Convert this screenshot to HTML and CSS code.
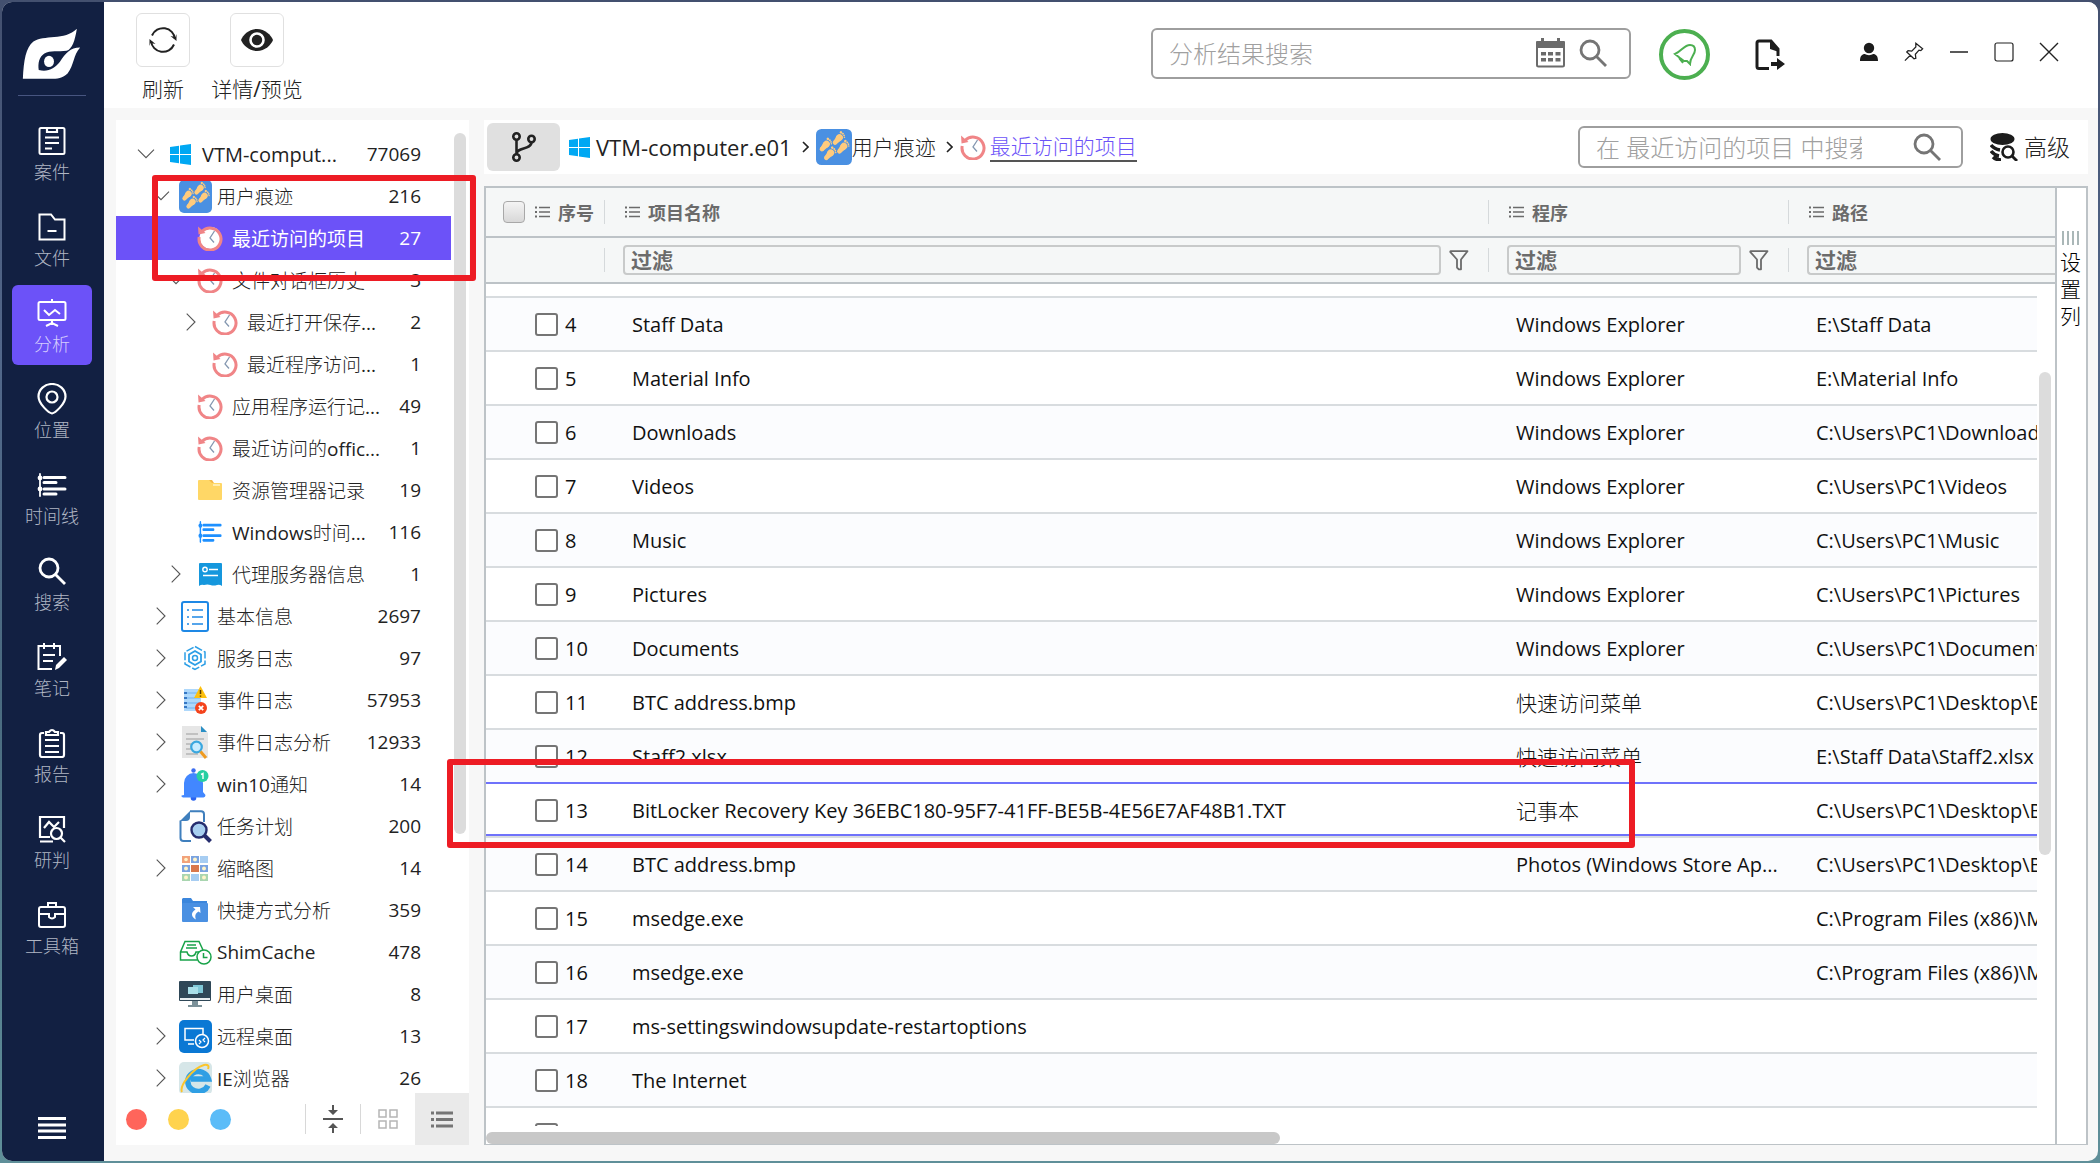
FILE: index.html
```html
<!DOCTYPE html>
<html lang="zh-CN">
<head>
<meta charset="utf-8">
<title>分析 - 最近访问的项目</title>
<link rel="stylesheet" href="styles.css">
</head>
<body>
<svg class="defs" aria-hidden="true">
  <symbol id="i-win" viewBox="0 0 21 21"><path fill="#00a8f3" d="M0 3l9-1.300v8.300H0zM10 1.500L21 0v10H10zM0 11h9v8.300L0 18zM10 11h11v10l-11-1.500z"/></symbol>
  <symbol id="i-feet" viewBox="0 0 33 33"><rect width="33" height="33" rx="5" fill="#4a90e2"/>
    <g fill="#ffcb7d">
      <g id="foot" transform="translate(20.500 9) rotate(42)"><ellipse cx="0" cy="-1.500" rx="3.100" ry="3.300"/><path d="M-3 -1.500L-1.800 5H2L2.900 -1.500z"/><ellipse cx="0" cy="4.500" rx="2.100" ry="2.200"/><circle cx="-2.200" cy="-6" r="1.200"/><circle cx="0" cy="-6.300" r=".9"/><circle cx="1.800" cy="-5.800" r=".8"/><circle cx="3.200" cy="-4.800" r=".7"/></g>
      <use href="#foot" transform="translate(-12 6)"/>
      <use href="#foot" transform="translate(4 8)"/>
      <use href="#foot" transform="translate(-8 14)"/>
    </g></symbol>
  <symbol id="i-clock" viewBox="0 0 26 26"><circle cx="13.500" cy="13" r="11" fill="#fff"/><path d="M5 6.500A11 11 0 1 1 2.200 12" fill="none" stroke="#f08587" stroke-width="3"/><path d="M1 1.500l7.500 6.500L1.500 9.500z" fill="#f08587"/><path d="M17.500 6l-4.500 7 4 4.500" fill="none" stroke="#8497b0" stroke-width="1.300"/></symbol>
  <symbol id="i-folder" viewBox="0 0 24 20"><path fill="#f5b94a" d="M10 0h4l2 3H9z"/><path fill="#ffd766" d="M1 0h10l3 3h9q1 0 1 1v15q0 1-1 1H1q-1 0-1-1V1q0-1 1-1z"/><path d="M15 5h7" stroke="#fff3c9" stroke-width="1.500"/></symbol>
  <symbol id="i-timeline" viewBox="0 0 30 24"><g stroke="currentColor" stroke-width="3" stroke-linecap="round"><path d="M7 4.500h21M7 9.500h12M7 16h21M7 21h12"/><path d="M3 1v22" stroke-width="1.800"/></g><circle cx="3" cy="5" r="2.400" fill="currentColor"/><circle cx="3" cy="16" r="2.400" fill="currentColor"/></symbol>
  <symbol id="i-proxy" viewBox="0 0 23 23"><path fill="#1597dd" d="M1 0h21q1 0 1 1v22q-2.500-2-5-1-3.500 1-6.500 0t-6.500 0q-2.500-1-5 1V1q0-1 1-1z"/><g fill="none" stroke="#fff" stroke-width="1.400"><circle cx="6" cy="6.500" r="2.200"/><path d="M10 6.500h9M4 12.500h15"/></g></symbol>
  <symbol id="i-list-box" viewBox="0 0 28 31"><rect x="1" y="1" width="26" height="29" rx="2" fill="#fff" stroke="#1e88e5" stroke-width="2"/><path d="M6 9h2M6 16h2M6 23h2M11 9h11M11 16h11M11 23h11" stroke="#1e88e5" stroke-width="1.400"/></symbol>
  <symbol id="i-hex" viewBox="0 0 24 26"><g fill="none" stroke="#2d9fe6" stroke-width="1.500"><path d="M12 1.500L22 7v12l-10 5.500L2 19V7z" stroke-dasharray="8 2"/><path d="M12 6l6 3.500v7L12 20l-6-3.500v-7z" stroke-width="1.800"/><circle cx="12" cy="13" r="2.500"/></g></symbol>
  <symbol id="i-event" viewBox="0 0 24 28"><rect x="1" y="3" width="17" height="22" fill="#aed8fb"/><path d="M3 7h14M3 12h14M3 17h14M3 22h12" stroke="#6fb1ee" stroke-width="1"/><path d="M1 7h3M1 12h3M1 17h3M1 21h3" stroke="#3677c4" stroke-width="2"/><path d="M17.500 0L24 12H11z" fill="#fdc010"/><path d="M17.500 4v4M17.500 9.500v1.200" stroke="#5a3c00" stroke-width="1.500"/><circle cx="18" cy="22" r="6" fill="#f4431c"/><path d="M15.800 19.800l4.400 4.400m0-4.400l-4.400 4.400" stroke="#fff" stroke-width="1.700"/></symbol>
  <symbol id="i-doc-search" viewBox="0 0 28 33"><path d="M1 0h19l7 7v25H1z" fill="#e6e6e6"/><path d="M20 0l6 6h-6z" fill="#2a8fc5"/><path d="M5 8h12M5 13h18M5 18h6M5 23h5M5 28h12" stroke="#9b9b9b" stroke-width="1.200"/><circle cx="15.500" cy="21" r="5.300" fill="#c9ecff" stroke="#3aa7df" stroke-width="2.200"/><path d="M19.500 25.500L25 32" stroke="#ef9b21" stroke-width="3"/></symbol>
  <symbol id="i-bell" viewBox="0 0 28 33"><circle cx="12.500" cy="2.500" r="2.200" fill="#3c6df0"/><circle cx="12.500" cy="30" r="2.800" fill="#2a63ef"/><path d="M3 27V15a9.500 10 0 0 1 19 0v9l2.500 3q0 2-2 2.500H2q-2-.5-1.500-2z" fill="#4287ff"/><circle cx="21.500" cy="8" r="6" fill="#27cfa2"/><path d="M20 6.500l2-1V11" fill="none" stroke="#fff" stroke-width="1.400"/></symbol>
  <symbol id="i-task" viewBox="0 0 33 33"><path d="M11 1.200h11q3 0 3 3V12M12 31H4.500q-3 0-3-3V10.500" fill="none" stroke="#3f7fbd" stroke-width="2"/><path d="M1 11L11 1v6q0 4-4 4z" fill="#3f7fbd"/><circle cx="20" cy="20" r="8" fill="#a8cff0" stroke="#fff" stroke-width="2"/><circle cx="20" cy="20" r="7.500" fill="none" stroke="#262d6e" stroke-width="2.400"/><path d="M25.500 25.500l6 6" stroke="#262d6e" stroke-width="4"/></symbol>
  <symbol id="i-thumbs" viewBox="0 0 26 26"><path fill="#f2a27a" d="M0 1h8v7H0z"/><path fill="#7aa3e0" d="M9 1h8v7H9zM0 10h8v7H0zM18 10h8v7h-8z"/><path fill="#a7cdf2" d="M18 1h8v7h-8zM9 19h8v7H9z"/><path fill="#d9774b" d="M9 10h8v7H9z"/><path fill="#a9d5b0" d="M0 19h8v7H0zM18 19h8v7h-8z"/><g fill="#fff4c9"><circle cx="4" cy="4.500" r="1.800"/><circle cx="13" cy="4.500" r="2"/><circle cx="4" cy="13.500" r="2"/><circle cx="22" cy="13.500" r="2"/><circle cx="4" cy="22.500" r="2"/><circle cx="22" cy="22.500" r="2"/></g></symbol>
  <symbol id="i-shortcut" viewBox="0 0 26 24"><path fill="#3b86dc" d="M1 0h8l2 3h14v4H0V1z"/><rect y="5" width="26" height="19" rx="1" fill="#4a90e2"/><path fill="#fff" d="M11 9l7 0 .5 6-2-1.500c-3 1.500-4 4.500-2.500 8-5-2.500-5.500-7-.5-10z"/></symbol>
  <symbol id="i-shim" viewBox="0 0 33 25"><g fill="none" stroke="#18a349" stroke-width="1.500"><path d="M18 20H1.500v-8L6 1.500h14L24 10M1.500 12H8q1 4 4.500 4T17 12h3M8 5h9M7 8h11"/><circle cx="25" cy="17" r="7"/><path d="M24.500 13v4.500h4"/></g></symbol>
  <symbol id="i-desktop" viewBox="0 0 32 26"><rect width="32" height="20" rx="1" fill="#2f4757"/><path fill="#e8eef0" d="M1 17h30v2H1z"/><path fill="#7b9199" d="M13 20h6v4h4v2H9v-2h4z"/><path fill="#7fc7d6" d="M14 4h10v8H14z"/><path fill="#a9dfe8" d="M9 6h10v7H9z"/></symbol>
  <symbol id="i-remote" viewBox="0 0 33 33"><rect width="33" height="33" rx="5" fill="#0a78d4"/><g fill="none" stroke="#fff" stroke-width="1.500"><path d="M15 20H6V8.500h18V14M9 24h6"/><circle cx="23" cy="21" r="6.500"/><path d="M20 20l2 2-2 2M26 18l-2 2 2 2" stroke-width="1.200"/></g></symbol>
  <symbol id="i-ie" viewBox="0 0 33 33"><rect width="33" height="33" rx="5" fill="#d6e6e8"/><path d="M29 23.500a10.500 10 0 1 1 .5-6.500H12" fill="none" stroke="#2f9fe4" stroke-width="5.500"/><path d="M3 30C0 24 14 6 25 3q6-1 4 4" fill="none" stroke="#fbc52c" stroke-width="2"/></symbol>
  <symbol id="i-down" viewBox="0 0 18 10"><path d="M1 .7l8 8 8-8" fill="none" stroke="#555" stroke-width="1.100"/></symbol>
  <symbol id="i-right" viewBox="0 0 10 18"><path d="M.7 .7L9 9 .7 17.300" fill="none" stroke="#555" stroke-width="1.100"/></symbol>
  <symbol id="i-search" viewBox="0 0 28 28"><g fill="none" stroke="currentColor" stroke-width="2.800"><circle cx="11" cy="11" r="9"/><path d="M17.500 17.500L27 27"/></g></symbol>
  <symbol id="i-lines" viewBox="0 0 15 12"><path d="M0 1.500h2M0 6h2M0 10.500h2" stroke="currentColor" stroke-width="2"/><path d="M4 1.500h11M4 6h11M4 10.500h11" stroke="currentColor" stroke-width="1.300"/></symbol>
  <symbol id="i-funnel" viewBox="0 0 20 21"><path d="M1.500 1.200h17L12 9.500v9.800H9.800L8 17.500v-8L1.200 1.800z" fill="none" stroke="#6b6b6b" stroke-width="1.800" stroke-linejoin="round"/></symbol>
</svg>

<div class="window">
  <nav class="sidebar" aria-label="主导航">
    <svg class="logo" viewBox="71 80 180 160" aria-hidden="true"><path fill="#fff" d="M73 236C76 180 82 142 105 124C135 102 200 122 236 85C230 122 222 146 205 152C180 156 155 150 138 160C122 170 118 190 121 210C150 217 168 205 185 185C203 158 215 143 246 142C225 165 228 195 208 220C190 238 165 237 140 236Z"/><ellipse cx="152" cy="184" rx="15" ry="17" fill="#fff"/></svg>
    <ul class="nav">
      <li><button class="nav-btn"><svg width="30" height="30" viewBox="0 0 30 30"><g fill="none" stroke="currentColor" stroke-width="2"><rect x="2.500" y="2" width="25" height="26" rx="1.500"/><path d="M10 2v4h10V2M8 11.500h14M8 17h14M8 22.500h7" stroke-width="2.200"/></g></svg><span>案件</span></button></li>
      <li><button class="nav-btn"><svg width="30" height="30" viewBox="0 0 30 30"><g fill="none" stroke="currentColor" stroke-width="2"><path d="M2.500 2.500H14l4 5h9.500v20h-25zM10.500 19h9"/></g></svg><span>文件</span></button></li>
      <li><button class="nav-btn active" aria-current="page"><svg width="30" height="30" viewBox="0 0 30 30"><g fill="none" stroke="currentColor" stroke-width="2"><rect x="1.500" y="4" width="27" height="18" rx="1.500"/><path d="M15 1v3M15 22v5M9 28l6-3 6 3M7 12l5 5 6-5 5 4"/></g></svg><span>分析</span></button></li>
      <li><button class="nav-btn"><svg width="30" height="32" viewBox="0 0 30 32"><g fill="none" stroke="currentColor" stroke-width="2.200"><path d="M15 30.500C12 30 1.500 21 1.500 13.500a13.500 12.500 0 0 1 27 0C28.500 21 18 30 15 30.500z"/><circle cx="15" cy="14" r="5.500"/></g></svg><span>位置</span></button></li>
      <li><button class="nav-btn"><svg width="30" height="24"><use href="#i-timeline"/></svg><span>时间线</span></button></li>
      <li><button class="nav-btn"><svg width="28" height="28"><use href="#i-search"/></svg><span>搜索</span></button></li>
      <li><button class="nav-btn"><svg width="30" height="30" viewBox="0 0 30 30"><g fill="none" stroke="currentColor" stroke-width="2"><path d="M23 14V4H1.500v23H15M7 1v6M17 1v6M6 13h12M6 19h10"/></g><path d="M18 28l1-5 8-8 3 3-8 8z" fill="currentColor"/></svg><span>笔记</span></button></li>
      <li><button class="nav-btn"><svg width="30" height="30" viewBox="0 0 30 30"><g fill="none" stroke="currentColor" stroke-width="2.200"><path d="M7 5H5q-2 0-2 2v20q0 2 2 2h20q2 0 2-2V7q0-2-2-2h-2M9 7V4h3q3-4 6 0h3v3zM8 12h14M8 18h14M8 24h14"/></g></svg><span>报告</span></button></li>
      <li><button class="nav-btn"><svg width="28" height="28" viewBox="0 0 28 28"><g fill="none" stroke="currentColor" stroke-width="2.200"><path d="M26 13V2H2v20h10M2 26.500h13M6 13l5-6 5 5 5-5"/><circle cx="18.500" cy="18.500" r="5.500"/><path d="M22.500 22.500L27 27"/></g></svg><span>研判</span></button></li>
      <li><button class="nav-btn"><svg width="30" height="28" viewBox="0 0 30 28"><g fill="none" stroke="currentColor" stroke-width="2"><rect x="2" y="6" width="26" height="20" rx="2"/><path d="M11 6V2h8v4M2 13h10M18 13h10M12 12v4q3 3 6 0v-4"/></g></svg><span>工具箱</span></button></li>
    </ul>
    <button class="menu-btn" aria-label="菜单"><svg width="28" height="22" viewBox="0 0 28 22"><path d="M0 1.500h28M0 8h28M0 14h28M0 20.500h28" stroke="#fff" stroke-width="2.800"/></svg></button>
  </nav>

  <div class="main">
    <header class="topbar">
      <button class="tool"><span class="tool-box"><svg width="28" height="28" viewBox="0 0 28 28"><g fill="none" stroke="#222" stroke-width="2"><path d="M3 9.500A12 12 0 0 1 26 13M25 18.500A12 12 0 0 1 2 15"/></g><path fill="#222" d="M27.500 15l-6-5 5 1 1-3zM.5 13l6 5-5-1-1 3z"/></svg></span>刷新</button>
      <button class="tool"><span class="tool-box"><svg width="34" height="24" viewBox="0 0 34 24"><path fill="#222" d="M17 1c8 0 14 6 16 11-2 5-8 11-16 11S3 17 1 12C3 7 9 1 17 1z"/><circle cx="17" cy="12" r="6.500" fill="none" stroke="#fff" stroke-width="2.600"/></svg></span>详情/预览</button>
      <div class="search search-top">
        <input type="text" placeholder="分析结果搜索" aria-label="分析结果搜索">
        <button class="icon-btn" aria-label="日期"><svg width="31" height="30" viewBox="0 0 31 30"><path fill="none" stroke="#6b6b6b" stroke-width="2" d="M2 5h27v22q0 1.500-1.500 1.500h-24Q2 28.500 2 27z"/><path fill="#6b6b6b" d="M1 4q0-1 1-1h27q1 0 1 1v6H1zM6 0h3v4H6zM22 0h3v4h-3zM6 14h5v3.500H6zM13 14h5v3.500h-5zM20.500 14h5v3.500h-5zM6 20h5v3.500H6zM13 20h5v3.500h-5zM20.500 20h5v3.500h-5z"/></svg></button>
        <button class="icon-btn" aria-label="搜索"><svg width="28" height="28"><use href="#i-search"/></svg></button>
      </div>
      <button class="bell-btn" aria-label="通知"><svg width="24" height="24" viewBox="0 0 24 24"><path d="M2 12C9 9 11 3 17 3q5 0 5 5c0 5-5 7-5 14l-3-3-3 0-4-3zM6 16l4 5" fill="none" stroke="#4caf50" stroke-width="2"/></svg></button>
      <button class="icon-btn" aria-label="导出"><svg width="30" height="32" viewBox="0 0 30 32"><path d="M14 29.500H4q-2 0-2-2V4q0-2 2-2h12l7 8v7" fill="none" stroke="#1c1c1c" stroke-width="3"/><path fill="#1c1c1c" d="M15 1l9 9v3l-9-3zM16 23h6v-4l8 6-8 6v-4h-6z"/></svg></button>
      <div class="win-ctl">
        <button class="icon-btn" aria-label="用户"><svg width="20" height="20" viewBox="0 0 20 20"><circle cx="10" cy="6" r="5.200" fill="#1c1c1c"/><path fill="#1c1c1c" d="M1 19c0-5 2-7 5-7 2 1.500 6 1.500 8 0 3 0 5 2 5 7z"/></svg></button>
        <button class="icon-btn" aria-label="置顶"><svg width="20" height="20" viewBox="0 0 22 22"><path d="M13 1.500l7.500 6-2 2-2-.5-4 4.500.5 4.500-2 .5-8-7.500 1.500-1.500 4 .5 4.500-4.500zM7 14.500l-6 6" fill="none" stroke="#222" stroke-width="1.400"/></svg></button>
        <button class="icon-btn" aria-label="最小化"><svg width="20" height="20" viewBox="0 0 20 20"><path d="M1 10h18" stroke="#222" stroke-width="1.500"/></svg></button>
        <button class="icon-btn" aria-label="最大化"><svg width="20" height="20" viewBox="0 0 20 20"><rect x="1" y="1" width="18" height="18" rx="2" fill="none" stroke="#222" stroke-width="1.200"/></svg></button>
        <button class="icon-btn" aria-label="关闭"><svg width="20" height="20" viewBox="0 0 20 20"><path d="M1 1l18 18M19 1L1 19" stroke="#222" stroke-width="1.400"/></svg></button>
      </div>
    </header>

    <div class="workspace">
      <aside class="tree-panel">
        <div class="tree-body">
          <ul class="tree">
            <li><a href="#" class="node l0"><span class="tw"><svg width="18" height="10"><use href="#i-down"/></svg></span><span class="ic"><svg width="21" height="21"><use href="#i-win"/></svg></span><span class="nm">VTM-comput...</span><span class="ct">77069</span></a></li>
            <li><a href="#" class="node l1"><span class="tw"><svg width="18" height="10"><use href="#i-down"/></svg></span><span class="ic"><svg width="33" height="33"><use href="#i-feet"/></svg></span><span class="nm">用户痕迹</span><span class="ct">216</span></a></li>
            <li><a href="#" class="node l2 selected"><span class="tw"></span><span class="ic"><svg width="26" height="26"><use href="#i-clock"/></svg></span><span class="nm">最近访问的项目</span><span class="ct">27</span></a></li>
            <li><a href="#" class="node l2"><span class="tw"><svg width="18" height="10"><use href="#i-down"/></svg></span><span class="ic"><svg width="26" height="26"><use href="#i-clock"/></svg></span><span class="nm">文件对话框历史</span><span class="ct">3</span></a></li>
            <li><a href="#" class="node l3"><span class="tw"><svg width="10" height="18"><use href="#i-right"/></svg></span><span class="ic"><svg width="26" height="26"><use href="#i-clock"/></svg></span><span class="nm">最近打开保存...</span><span class="ct">2</span></a></li>
            <li><a href="#" class="node l3"><span class="tw"></span><span class="ic"><svg width="26" height="26"><use href="#i-clock"/></svg></span><span class="nm">最近程序访问...</span><span class="ct">1</span></a></li>
            <li><a href="#" class="node l2"><span class="tw"></span><span class="ic"><svg width="26" height="26"><use href="#i-clock"/></svg></span><span class="nm">应用程序运行记...</span><span class="ct">49</span></a></li>
            <li><a href="#" class="node l2"><span class="tw"></span><span class="ic"><svg width="26" height="26"><use href="#i-clock"/></svg></span><span class="nm">最近访问的offic...</span><span class="ct">1</span></a></li>
            <li><a href="#" class="node l2"><span class="tw"></span><span class="ic"><svg width="24" height="20"><use href="#i-folder"/></svg></span><span class="nm">资源管理器记录</span><span class="ct">19</span></a></li>
            <li><a href="#" class="node l2"><span class="tw"></span><span class="ic blue"><svg width="24" height="22" viewBox="0 0 30 24" preserveAspectRatio="none"><use href="#i-timeline" width="30" height="24"/></svg></span><span class="nm">Windows时间...</span><span class="ct">116</span></a></li>
            <li><a href="#" class="node l2"><span class="tw"><svg width="10" height="18"><use href="#i-right"/></svg></span><span class="ic"><svg width="23" height="23"><use href="#i-proxy"/></svg></span><span class="nm">代理服务器信息</span><span class="ct">1</span></a></li>
            <li><a href="#" class="node l1"><span class="tw"><svg width="10" height="18"><use href="#i-right"/></svg></span><span class="ic"><svg width="28" height="31"><use href="#i-list-box"/></svg></span><span class="nm">基本信息</span><span class="ct">2697</span></a></li>
            <li><a href="#" class="node l1"><span class="tw"><svg width="10" height="18"><use href="#i-right"/></svg></span><span class="ic"><svg width="24" height="26"><use href="#i-hex"/></svg></span><span class="nm">服务日志</span><span class="ct">97</span></a></li>
            <li><a href="#" class="node l1"><span class="tw"><svg width="10" height="18"><use href="#i-right"/></svg></span><span class="ic"><svg width="24" height="28"><use href="#i-event"/></svg></span><span class="nm">事件日志</span><span class="ct">57953</span></a></li>
            <li><a href="#" class="node l1"><span class="tw"><svg width="10" height="18"><use href="#i-right"/></svg></span><span class="ic"><svg width="28" height="33"><use href="#i-doc-search"/></svg></span><span class="nm">事件日志分析</span><span class="ct">12933</span></a></li>
            <li><a href="#" class="node l1"><span class="tw"><svg width="10" height="18"><use href="#i-right"/></svg></span><span class="ic"><svg width="28" height="33"><use href="#i-bell"/></svg></span><span class="nm">win10通知</span><span class="ct">14</span></a></li>
            <li><a href="#" class="node l1"><span class="tw"></span><span class="ic"><svg width="33" height="33"><use href="#i-task"/></svg></span><span class="nm">任务计划</span><span class="ct">200</span></a></li>
            <li><a href="#" class="node l1"><span class="tw"><svg width="10" height="18"><use href="#i-right"/></svg></span><span class="ic"><svg width="26" height="26"><use href="#i-thumbs"/></svg></span><span class="nm">缩略图</span><span class="ct">14</span></a></li>
            <li><a href="#" class="node l1"><span class="tw"></span><span class="ic"><svg width="26" height="24"><use href="#i-shortcut"/></svg></span><span class="nm">快捷方式分析</span><span class="ct">359</span></a></li>
            <li><a href="#" class="node l1"><span class="tw"></span><span class="ic"><svg width="33" height="25"><use href="#i-shim"/></svg></span><span class="nm">ShimCache</span><span class="ct">478</span></a></li>
            <li><a href="#" class="node l1"><span class="tw"></span><span class="ic"><svg width="32" height="26"><use href="#i-desktop"/></svg></span><span class="nm">用户桌面</span><span class="ct">8</span></a></li>
            <li><a href="#" class="node l1"><span class="tw"><svg width="10" height="18"><use href="#i-right"/></svg></span><span class="ic"><svg width="33" height="33"><use href="#i-remote"/></svg></span><span class="nm">远程桌面</span><span class="ct">13</span></a></li>
            <li><a href="#" class="node l1"><span class="tw"><svg width="10" height="18"><use href="#i-right"/></svg></span><span class="ic"><svg width="33" height="33"><use href="#i-ie"/></svg></span><span class="nm">IE浏览器</span><span class="ct">26</span></a></li>
          </ul>
          <div class="tree-scroll"><div class="thumb"></div></div>
        </div>
        <div class="tree-foot">
          <div class="dots"><span class="dot red"></span><span class="dot yellow"></span><span class="dot sky"></span></div>
          <button class="foot-btn" aria-label="折叠"><svg width="20" height="28" viewBox="0 0 20 28"><path d="M0 14h20" stroke="#555" stroke-width="2"/><path fill="#555" d="M9 0h2v5h4l-5 5-5-5h4zM9 28h2v-5h4l-5-5-5 5h4z"/></svg></button>
          <button class="foot-btn" aria-label="网格"><svg width="20" height="20" viewBox="0 0 20 20"><path d="M1 1h7v7H1zM12 1h7v7h-7zM1 12h7v7H1zM12 12h7v7h-7z" fill="none" stroke="#b5b5b5" stroke-width="1.500"/></svg></button>
          <button class="foot-btn on" aria-label="列表"><svg width="22" height="17" viewBox="0 0 22 17"><path d="M0 2h3M0 8.500h3M0 15h3M5 2h17M5 8.500h17M5 15h17" stroke="#757575" stroke-width="3"/></svg></button>
        </div>
      </aside>

      <section class="content">
        <div class="crumbs">
          <button class="branch-btn" aria-label="路径"><svg width="26" height="30" viewBox="0 0 26 30"><g fill="none" stroke="#222" stroke-width="2.600"><circle cx="5.500" cy="4.500" r="3.200"/><circle cx="5.500" cy="25.500" r="3.200"/><circle cx="20.500" cy="7" r="3.200"/><path d="M5.500 8v14M20.500 10c0 8-15 5-15 12"/></g></svg></button>
          <div class="trail">
            <svg width="21" height="21"><use href="#i-win"/></svg>
            <span class="c-root">VTM-computer.e01</span>
            <svg class="sep" width="7" height="12" viewBox="0 0 7 12"><path d="M1 1l5 5-5 5" fill="none" stroke="#222" stroke-width="1.600"/></svg>
            <span class="c-mid"><svg width="36" height="36"><use href="#i-feet"/></svg>用户痕迹</span>
            <svg class="sep" width="7" height="12" viewBox="0 0 7 12"><path d="M1 1l5 5-5 5" fill="none" stroke="#222" stroke-width="1.600"/></svg>
            <svg width="26" height="26"><use href="#i-clock"/></svg>
            <a href="#" class="c-link">最近访问的项目</a>
          </div>
          <div class="search search-in">
            <input type="text" placeholder="在 最近访问的项目 中搜索" aria-label="在结果中搜索">
            <button class="icon-btn" aria-label="搜索"><svg width="28" height="28"><use href="#i-search"/></svg></button>
          </div>
          <button class="adv"><svg width="28" height="28" viewBox="0 0 28 28"><ellipse cx="12.500" cy="6" rx="12" ry="6" fill="#1c1c1c"/><path d="M1 12q3 4 9 5M1 18q3 4 8 5M3 24q3 3 8 3" fill="none" stroke="#1c1c1c" stroke-width="3.500"/><circle cx="18" cy="19" r="5.500" fill="#fff" stroke="#1c1c1c" stroke-width="2.600"/><path d="M22 23l5 5" stroke="#1c1c1c" stroke-width="2.800"/></svg>高级</button>
        </div>

        <div class="grid">
          <div class="grid-main">
            <table class="t-head">
              <colgroup><col class="w-idx"><col><col class="w-prog"><col class="w-path"></colgroup>
              <thead>
                <tr class="h-row">
                  <th><div class="hc first"><input type="checkbox" class="all" aria-label="全选"><svg width="15" height="12"><use href="#i-lines"/></svg>序号</div></th>
                  <th><div class="hc"><svg width="15" height="12"><use href="#i-lines"/></svg>项目名称</div></th>
                  <th><div class="hc"><svg width="15" height="12"><use href="#i-lines"/></svg>程序</div></th>
                  <th><div class="hc last"><svg width="15" height="12"><use href="#i-lines"/></svg>路径</div></th>
                </tr>
                <tr class="f-row">
                  <td><div class="fc"></div></td>
                  <td><div class="fc"><input type="text" placeholder="过滤" aria-label="过滤项目名称"><svg width="20" height="21"><use href="#i-funnel"/></svg></div></td>
                  <td><div class="fc"><input type="text" placeholder="过滤" aria-label="过滤程序"><svg width="20" height="21"><use href="#i-funnel"/></svg></div></td>
                  <td><div class="fc open"><input type="text" placeholder="过滤" aria-label="过滤路径"></div></td>
                </tr>
              </thead>
            </table>
            <div class="grid-body">
              <div class="rows">
                <table class="t-body">
                  <colgroup><col class="w-idx"><col><col class="w-prog"><col class="w-path"></colgroup>
                  <tbody>
                    <tr class="cut"><td colspan="4"></td></tr>
                    <tr><td><label><input type="checkbox">4</label></td><td>Staff Data</td><td>Windows Explorer</td><td>E:\Staff Data</td></tr>
                    <tr><td><label><input type="checkbox">5</label></td><td>Material Info</td><td>Windows Explorer</td><td>E:\Material Info</td></tr>
                    <tr><td><label><input type="checkbox">6</label></td><td>Downloads</td><td>Windows Explorer</td><td>C:\Users\PC1\Downloads</td></tr>
                    <tr><td><label><input type="checkbox">7</label></td><td>Videos</td><td>Windows Explorer</td><td>C:\Users\PC1\Videos</td></tr>
                    <tr><td><label><input type="checkbox">8</label></td><td>Music</td><td>Windows Explorer</td><td>C:\Users\PC1\Music</td></tr>
                    <tr><td><label><input type="checkbox">9</label></td><td>Pictures</td><td>Windows Explorer</td><td>C:\Users\PC1\Pictures</td></tr>
                    <tr><td><label><input type="checkbox">10</label></td><td>Documents</td><td>Windows Explorer</td><td>C:\Users\PC1\Documents</td></tr>
                    <tr><td><label><input type="checkbox">11</label></td><td>BTC address.bmp</td><td class="zh">快速访问菜单</td><td>C:\Users\PC1\Desktop\B</td></tr>
                    <tr class="before"><td><label><input type="checkbox">12</label></td><td>Staff2.xlsx</td><td class="zh">快速访问菜单</td><td>E:\Staff Data\Staff2.xlsx</td></tr>
                    <tr class="current"><td><label><input type="checkbox">13</label></td><td>BitLocker Recovery Key 36EBC180-95F7-41FF-BE5B-4E56E7AF48B1.TXT</td><td class="zh">记事本</td><td>C:\Users\PC1\Desktop\B</td></tr>
                    <tr><td><label><input type="checkbox">14</label></td><td>BTC address.bmp</td><td>Photos (Windows Store Ap...</td><td>C:\Users\PC1\Desktop\B</td></tr>
                    <tr><td><label><input type="checkbox">15</label></td><td>msedge.exe</td><td></td><td>C:\Program Files (x86)\M</td></tr>
                    <tr><td><label><input type="checkbox">16</label></td><td>msedge.exe</td><td></td><td>C:\Program Files (x86)\M</td></tr>
                    <tr><td><label><input type="checkbox">17</label></td><td>ms-settingswindowsupdate-restartoptions</td><td></td><td></td></tr>
                    <tr><td><label><input type="checkbox">18</label></td><td>The Internet</td><td></td><td></td></tr>
                    <tr><td><label><input type="checkbox" aria-label="选择"></label></td><td></td><td></td><td></td></tr>
                  </tbody>
                </table>
              </div>
              <div class="v-scroll"><div class="thumb"></div></div>
            </div>
            <div class="h-scroll"><div class="thumb"></div></div>
          </div>
          <button class="col-set"><svg width="17" height="14" viewBox="0 0 17 14"><path d="M1 0v14M6 0v14M11 0v14M16 0v14" stroke="#95a5a6" stroke-width="1.600"/></svg><span>设</span><span>置</span><span>列</span></button>
        </div>
      </section>
    </div>
  </div>
  <div class="mark mark-tree"></div>
  <div class="mark mark-row"></div>
</div>
</body>
</html>
```
FILE: styles.css
```css
* { box-sizing: border-box; }

body {
  margin: 0;
  padding: 2px;
  height: 100vh;
  overflow: hidden;
  font-family: "Open Sans", "Noto Sans CJK SC Light", "Noto Sans CJK SC", sans-serif;
  font-size: 19px;
  color: #222;
  background: linear-gradient(180deg, #43506f 0%, #52678a 30%, #4a6b80 60%, #5f8f99 100%);
}

ul { margin: 0; padding: 0; list-style: none; }
button { margin: 0; padding: 0; border: 0; background: none; font: inherit; color: inherit; }
input { margin: 0; font: inherit; }
svg { display: block; flex: none; }
.defs { position: absolute; width: 0; height: 0; }

.window {
  position: relative;
  display: flex;
  height: 100%;
  border-radius: 10px;
  overflow: hidden;
  background: #f7f7f7;
}

/* left navigation */
.sidebar {
  flex: none;
  width: 102px;
  display: flex;
  flex-direction: column;
  align-items: center;
  padding: 25px 2px 22px 0;
  background: #122042;
}
.logo { width: 60px; height: 53px; }
.nav {
  display: flex;
  flex-direction: column;
  align-items: center;
  gap: 6px;
  width: 68px;
  margin-top: 15px;
  padding-top: 17px;
  border-top: 1px solid #475580;
}
.nav-btn {
  display: flex;
  flex-direction: column;
  align-items: center;
  width: 80px;
  height: 80px;
  padding-top: 9px;
  border-radius: 6px;
  color: #fff;
  font-size: 18px;
  line-height: 26px;
}
.nav-btn svg { margin: auto 0; }
.nav-btn span { margin-bottom: 8px; color: #b0b6c4; }
.nav-btn.active { background: #6c52f8; }
.nav-btn.active span { color: #d5cdfd; }
.menu-btn { margin-top: auto; }

.main { flex: 1; min-width: 0; display: flex; flex-direction: column; }

/* top bar */
.topbar {
  flex: none;
  display: flex;
  align-items: center;
  height: 106px;
  padding: 0 39px 0 25px;
  background: #fff;
}
.tool {
  display: flex;
  flex-direction: column;
  align-items: center;
  gap: 7px;
  width: 68px;
  margin-top: 6px;
  font-size: 21px;
  line-height: 30px;
  white-space: nowrap;
}
.tool + .tool { width: 94px; margin-left: 13px; }
.tool-box {
  display: flex;
  align-items: center;
  justify-content: center;
  width: 54px;
  height: 54px;
  border: 1px solid #e0e0e0;
  border-radius: 6px;
}
.search {
  display: flex;
  align-items: center;
  border: 2px solid #9e9e9e;
  border-radius: 6px;
  background: #fff;
  color: #757575;
  font-size: 24px;
}
.search input { border: 0; padding: 0; outline: 0; background: none; min-width: 0; }
.search input::placeholder { color: #a0a0a0; opacity: 1; font-weight: 300; }
.search-top { width: 480px; height: 51px; margin: 0 28px 4px auto; padding: 0 22px 0 16px; gap: 13px; }
.search-top input { flex: 1; }
.bell-btn {
  display: flex;
  align-items: center;
  justify-content: center;
  width: 51px;
  height: 51px;
  margin: 0 45px 2px 0;
  border: 4px solid #4caf50;
  border-radius: 50%;
}
.win-ctl { display: flex; align-items: center; gap: 25px; margin: 0 0 6px 74px; }

.workspace { flex: 1; min-height: 0; display: flex; gap: 15px; padding: 12px 10px 16px 12px; }

/* evidence tree */
.tree-panel { flex: none; width: 353px; display: flex; flex-direction: column; background: #fff; }
.tree-body { flex: 1; min-height: 0; display: flex; gap: 3px; overflow: hidden; padding-top: 13px; }
.tree { width: 335px; }
.node {
  display: flex;
  align-items: center;
  height: 42px;
  padding-right: 30px;
  color: #222;
  text-decoration: none;
  white-space: nowrap;
}
.l0 { padding-left: 21px; }
.l1 { padding-left: 36px; }
.l2 { padding-left: 51px; }
.l3 { padding-left: 66px; }
.l0 .nm { font-size: 20px; }
.tw { flex: none; display: flex; justify-content: center; width: 18px; margin-right: 7px; }
.ic { flex: none; display: flex; justify-content: center; width: 36px; margin-right: 4px; }
.ic.blue { color: #1e90ff; }
.nm { flex: 1; }
.ct { flex: none; }
.node.selected {
  background: #6c52f8;
  box-shadow: 0 -1px 0 #6c52f8, 0 1px 0 #6c52f8;
  color: #fff;
  font-family: "Open Sans", "Noto Sans CJK SC", sans-serif;
}
.tree-scroll { width: 12px; }
.tree-scroll .thumb { height: 73%; border-radius: 6px; background: #dcdcdc; }
.tree-foot { flex: none; display: flex; align-items: center; height: 52px; padding-left: 10px; }
.dots { display: flex; gap: 21px; margin-right: auto; }
.dot { width: 21px; height: 21px; border-radius: 50%; }
.red { background: #ff655b; }
.yellow { background: #ffd34e; }
.sky { background: #5bbcf8; }
.foot-btn {
  display: flex;
  align-items: center;
  justify-content: center;
  width: 55px;
  height: 30px;
  border-left: 1px solid #d8d8d8;
}
.foot-btn.on { width: 54px; height: 52px; border: 0; background: #eaeaea; }

/* content column */
.content { flex: 1; min-width: 0; display: flex; flex-direction: column; gap: 12px; }
.crumbs { flex: none; display: flex; align-items: center; height: 54px; padding: 0 18px 0 3px; background: #fff; }
.branch-btn {
  display: flex;
  align-items: center;
  justify-content: center;
  width: 73px;
  height: 48px;
  border-radius: 6px;
  background: #e0e0e0;
}
.trail { display: flex; align-items: center; margin-left: 9px; font-size: 21px; line-height: 28px; }
.c-root { margin-left: 6px; font-size: 22px; }
.sep { margin: 0 7px 0 10px; }
.c-mid { display: flex; align-items: center; }
.c-link { margin-left: 4px; border-bottom: 2px solid #555; color: #6c52f8; text-decoration: none; }
.search-in { width: 385px; height: 42px; margin-left: auto; padding: 0 20px 0 16px; justify-content: space-between; }
.search-in input { width: 266px; height: 34px; }
.adv { display: flex; align-items: center; gap: 6px; margin-left: 27px; font-size: 23px; line-height: 30px; }

/* result grid */
.grid { flex: 1; min-height: 0; display: flex; border: 2px solid #bdc3c7; border-bottom-width: 1px; background: #fff; }
.grid-main { flex: 1; min-width: 0; display: flex; flex-direction: column; }
table { width: 100%; table-layout: fixed; border-collapse: separate; border-spacing: 0; }
th, td { padding: 0; text-align: left; overflow: hidden; white-space: nowrap; }
.w-idx { width: 119px; }
.w-prog { width: 300px; }
.t-head { flex: none; background: #f5f7f7; }
.t-head .w-path { width: 266px; }
.t-head th, .t-head td { border-bottom: 2px solid #bdc3c7; }
.h-row th { height: 50px; font-family: "Open Sans", "Noto Sans CJK SC", sans-serif; font-size: 18px; color: #6b6b6b; }
.f-row td { height: 46px; }
.hc {
  display: flex;
  align-items: center;
  gap: 8px;
  height: 24px;
  padding-left: 20px;
  border-right: 1px solid #d5d9db;
}
.hc.first { padding-left: 17px; }
.hc.first svg { margin-left: 2px; }
.hc.last { border: 0; }
.all {
  appearance: none;
  width: 22px;
  height: 22px;
  border: 1px solid #a8a8a8;
  border-radius: 4px;
  background: linear-gradient(#f4f4f4, #d8d8d8);
}
.fc { display: flex; align-items: center; gap: 8px; height: 24px; padding: 0 19px 0 18px; border-right: 1px solid #d5d9db; }
.fc input {
  flex: 1;
  min-width: 0;
  height: 30px;
  padding: 0 6px;
  border: 2px solid #c8caca;
  border-radius: 4px;
  background: transparent;
  font-family: "Open Sans", "Noto Sans CJK SC", sans-serif;
  font-size: 21px;
  font-weight: 700;
}
.fc input::placeholder { color: #6b6b6b; opacity: 1; }
.fc.open { border: 0; padding-right: 0; }
.fc.open input { border-right: 0; border-radius: 4px 0 0 4px; }

.grid-body { flex: 1; min-height: 0; display: flex; gap: 2px; }
.rows { flex: 1; min-width: 0; overflow: hidden; }
.t-body .w-path { width: 248px; }
.t-body td { height: 54px; border-bottom: 2px solid #d8dcdf; padding-left: 27px; font-size: 20px; color: #111; }
.t-body td:first-child { padding-left: 49px; }
.t-body .cut td { height: 14px; }
.t-body tr:nth-child(even) td { background: #fbfcfe; }
.t-body .zh { font-size: 21px; }
.t-body .before td { border-bottom-color: #6f72fb; }
.t-body .current td { box-shadow: inset 0 -2px 0 #6f72fb; }
.t-body label { display: flex; align-items: center; gap: 7px; }
.t-body input {
  appearance: none;
  width: 23px;
  height: 23px;
  border: 2px solid #757575;
  border-radius: 3px;
  background: #fff;
}
.v-scroll { flex: none; width: 16px; padding-top: 88px; }
.v-scroll .thumb { width: 12px; height: 64%; border-radius: 6px; background: #dcdcdc; }
.h-scroll { flex: none; padding-top: 6px; }
.h-scroll .thumb { width: 50.6%; height: 12px; border-radius: 6px; background: #c8c8c8; }
.col-set {
  flex: none;
  display: flex;
  flex-direction: column;
  align-items: center;
  width: 31px;
  padding: 43px 2px 0 0;
  border-left: 2px solid #bdc3c7;
  font-size: 21px;
  line-height: 27px;
  color: #000;
}
.col-set svg { margin-bottom: 4px; }

/* callout frames drawn over the window */
.mark { position: absolute; border: 6px solid #ed1c24; border-radius: 3px; pointer-events: none; }
.mark-tree { left: 150px; top: 173px; width: 324px; height: 106px; }
.mark-row { left: 445px; top: 757px; right: 463px; height: 89px; }
```
